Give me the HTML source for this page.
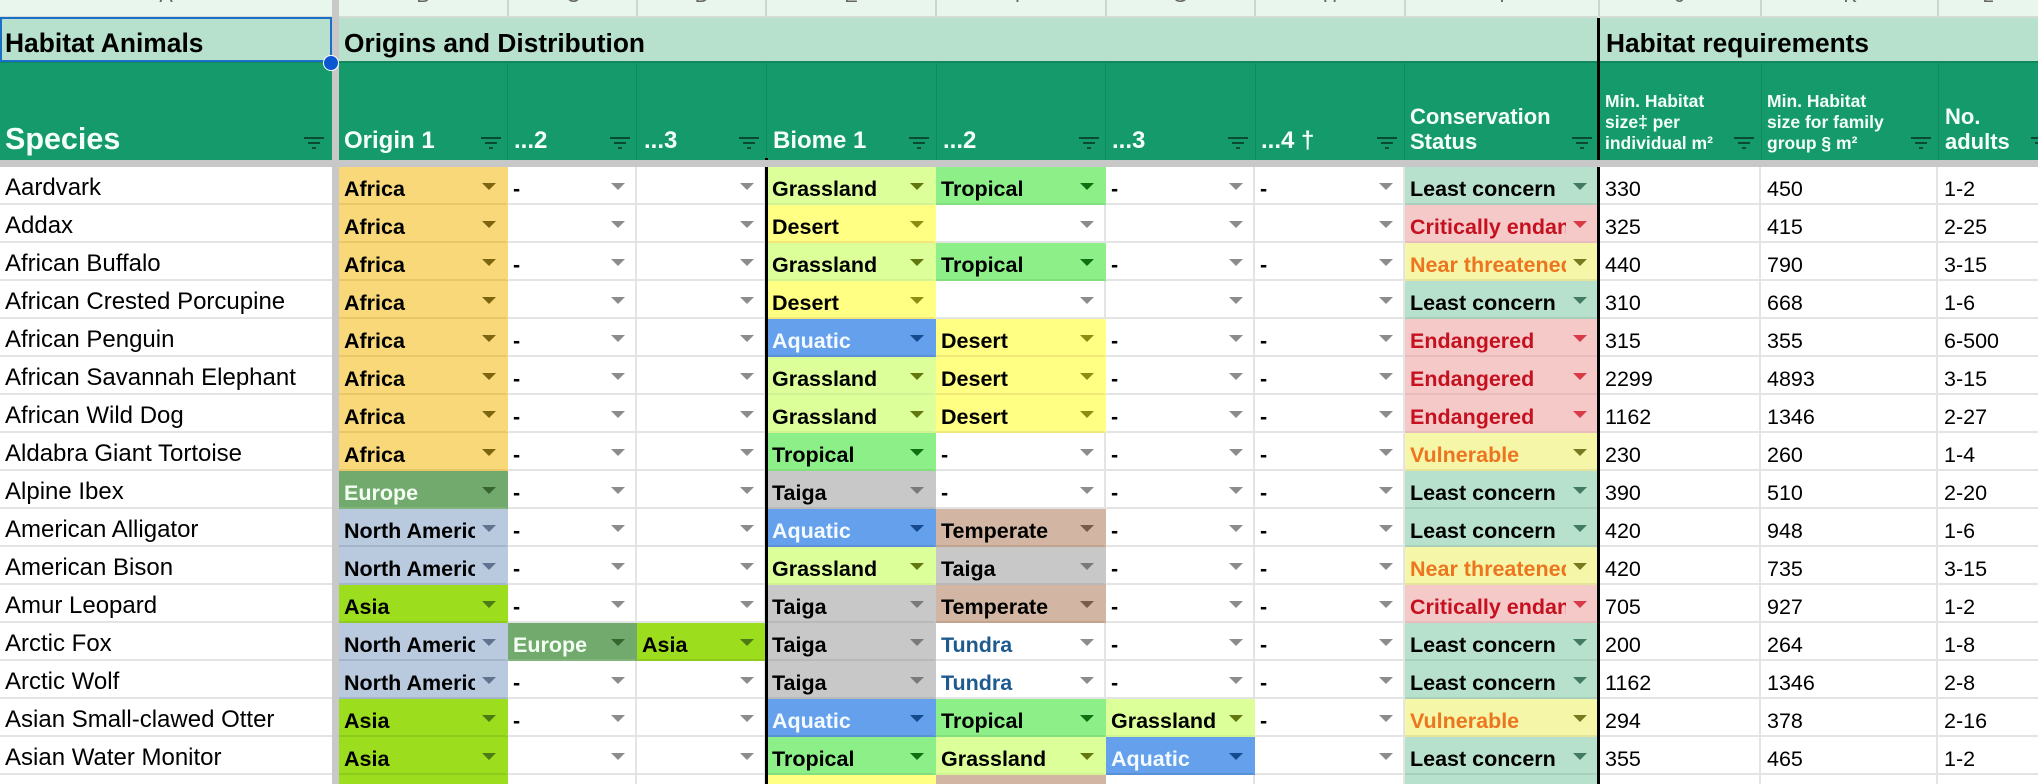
<!DOCTYPE html>
<html lang="en"><head><meta charset="utf-8"><title>Habitat Animals</title>
<style>
*{box-sizing:border-box}
html,body{margin:0;padding:0;background:#fff;overflow:hidden;width:2038px;height:784px}
#p{position:relative;width:2038px;height:784px;overflow:hidden;font-family:"Liberation Sans",Arial,sans-serif;color:#000;filter:blur(.35px)}
.a{position:absolute}
.t{position:absolute;white-space:nowrap;line-height:1;font-weight:bold}
.w{color:#f4fff9}
.l{position:absolute;top:-14px;font-size:20px;line-height:1;color:#666;width:40px;text-align:center}
.f{position:absolute;top:137px;width:20px;height:12px;fill:#0a4a32}
table{position:absolute;left:0;top:167px;border-collapse:separate;border-spacing:0;table-layout:fixed;width:2100px}
td{position:relative;height:38px;padding:9px 0 0 5px;vertical-align:top;font-size:21.5px;line-height:27px;font-weight:bold;white-space:nowrap;border-bottom:2px solid #e4e4e4;border-right:2px solid #e4e4e4;overflow:hidden}
td.n{padding:7px 0 0 5px;font-size:24px;line-height:28px;font-weight:normal;border-right:0}
td.g{background:#c8c8c8;border:0;padding:0}
td.v{font-weight:normal;padding-left:6px}
td i{display:block;font-style:normal;overflow:hidden;margin-right:31px}
td.d::after{content:"";position:absolute;right:10px;top:16px;border-left:7px solid transparent;border-right:7px solid transparent;border-top:7.5px solid #8c8c8c}
td.e{padding-left:6px}
.af{background:#f8d878;border-bottom-color:#e9c767}.af::after{border-top-color:#7d6510!important}
.eu{background:#72aa6e;border-bottom-color:#80b57c;color:#f4fff4}.eu::after{border-top-color:#36652f!important}
.as{background:#9cdd1e;border-bottom-color:#8ecb1c}.as::after{border-top-color:#4d7a12!important}
.na{background:#bacade;border-bottom-color:#a5b5c9}.na::after{border-top-color:#5f7390!important}
.gr{background:#dcff9a;border-bottom-color:#d3f293}.gr::after{border-top-color:#62780f!important}
.tr{background:#8cef88;border-bottom-color:#82de7e}.tr::after{border-top-color:#0f7012!important}
.de{background:#ffff84;border-bottom-color:#f0e878}.de::after{border-top-color:#8f8c14!important}
.aq{background:#64a0eb;border-bottom-color:#5a90d4;color:#f5faff}.aq::after{border-top-color:#164a8e!important}
.te{background:#d2b5a2;border-bottom-color:#c0a490}.te::after{border-top-color:#7b5a48!important}
.ta{background:#c8c8c8;border-bottom-color:#b9b9b9}.ta::after{border-top-color:#7a7a7a!important}
.tu{color:#1f5a8f}
.lc{background:#b7e1cd;border-bottom-color:#a8cfbc}.lc::after{border-top-color:#427a60!important}
.cr{background:#f6c9c9;border-bottom-color:#e8bcbc;color:#c5101f}.cr::after{border-top-color:#d83a48!important}
.nt{background:#f6f6a8;border-bottom-color:#e4e49c;color:#ec761f}.nt::after{border-top-color:#787a22!important}
.af,.eu,.as,.na,.gr,.tr,.de,.aq,.te,.ta,.lc,.cr,.nt{border-right-color:transparent}
</style></head>
<body>
<div id="p">
<!-- column letter strip -->
<div class="a" style="left:0;top:0;width:2038px;height:16px;background:#e8f6ed"></div>
<div class="a" style="left:0;top:16px;width:2038px;height:2px;background:#d4dcd6"></div>
<div class="a" style="left:507px;top:0;width:2px;height:16px;background:#ccd6cf"></div>
<div class="a" style="left:636px;top:0;width:2px;height:16px;background:#ccd6cf"></div>
<div class="a" style="left:765px;top:0;width:2px;height:16px;background:#ccd6cf"></div>
<div class="a" style="left:935px;top:0;width:2px;height:16px;background:#ccd6cf"></div>
<div class="a" style="left:1105px;top:0;width:2px;height:16px;background:#ccd6cf"></div>
<div class="a" style="left:1254px;top:0;width:2px;height:16px;background:#ccd6cf"></div>
<div class="a" style="left:1404px;top:0;width:2px;height:16px;background:#ccd6cf"></div>
<div class="a" style="left:1598px;top:0;width:2px;height:16px;background:#ccd6cf"></div>
<div class="a" style="left:1760px;top:0;width:2px;height:16px;background:#ccd6cf"></div>
<div class="a" style="left:1937px;top:0;width:2px;height:16px;background:#ccd6cf"></div>
<div class="l" style="left:146px">A</div><div class="l" style="left:403px">B</div><div class="l" style="left:553px">C</div><div class="l" style="left:682px">D</div><div class="l" style="left:831px">E</div><div class="l" style="left:1001px">F</div><div class="l" style="left:1160px">G</div><div class="l" style="left:1310px">H</div><div class="l" style="left:1482px">I</div><div class="l" style="left:1660px">J</div><div class="l" style="left:1830px">K</div><div class="l" style="left:1968px">L</div>

<!-- title and header rows -->
<div class="a" style="left:0;top:18px;width:2038px;height:43px;background:#b7e1cd"></div>
<div class="a" style="left:0;top:61px;width:2038px;height:99px;background:#159a6c;border-top:2px solid #12875f"></div>
<div class="a" style="left:507px;top:63px;width:1px;height:97px;background:#128a60"></div>
<div class="a" style="left:636px;top:63px;width:1px;height:97px;background:#128a60"></div>
<div class="a" style="left:766px;top:63px;width:1px;height:97px;background:#128a60"></div>
<div class="a" style="left:936px;top:63px;width:1px;height:97px;background:#128a60"></div>
<div class="a" style="left:1105px;top:63px;width:1px;height:97px;background:#128a60"></div>
<div class="a" style="left:1255px;top:63px;width:1px;height:97px;background:#128a60"></div>
<div class="a" style="left:1404px;top:63px;width:1px;height:97px;background:#128a60"></div>
<div class="a" style="left:1761px;top:63px;width:1px;height:97px;background:#128a60"></div>
<div class="a" style="left:1938px;top:63px;width:1px;height:97px;background:#128a60"></div>

<div class="t" style="left:5px;top:30px;font-size:26.4px">Habitat Animals</div>
<div class="t" style="left:344px;top:30px;font-size:26.3px">Origins and Distribution</div>
<div class="t" style="left:1606px;top:30px;font-size:26.3px">Habitat requirements</div>
<div class="t w" style="left:5px;top:124px;font-size:30.5px">Species</div>
<div class="t w" style="left:344px;top:129px;font-size:24px">Origin 1</div>
<div class="t w" style="left:514px;top:129px;font-size:24px">...2</div>
<div class="t w" style="left:644px;top:129px;font-size:24px">...3</div>
<div class="t w" style="left:773px;top:129px;font-size:24px">Biome 1</div>
<div class="t w" style="left:943px;top:129px;font-size:24px">...2</div>
<div class="t w" style="left:1112px;top:129px;font-size:24px">...3</div>
<div class="t w" style="left:1261px;top:129px;font-size:24px">...4 †</div>
<div class="t w" style="left:1410px;top:103.5px;font-size:22px;line-height:25.5px">Conservation<br>Status</div>
<div class="t w" style="left:1605px;top:91px;font-size:17.5px;line-height:21.2px">Min. Habitat<br>size‡ per<br>individual m²</div>
<div class="t w" style="left:1767px;top:91px;font-size:17.5px;line-height:21.2px">Min. Habitat<br>size for family<br>group § m²</div>
<div class="t w" style="left:1945px;top:103.5px;font-size:22px;line-height:25.5px">No.<br>adults</div>

<svg width="0" height="0" style="position:absolute"><symbol id="fi" viewBox="0 0 20 12"><path d="M0 0h20v2H0zM4 5h12v2H4zM8 10h4v2H8z"/></symbol></svg>
<svg class="f" style="left:304px"><use href="#fi"/></svg>
<svg class="f" style="left:481px"><use href="#fi"/></svg>
<svg class="f" style="left:610px"><use href="#fi"/></svg>
<svg class="f" style="left:739px"><use href="#fi"/></svg>
<svg class="f" style="left:909px"><use href="#fi"/></svg>
<svg class="f" style="left:1079px"><use href="#fi"/></svg>
<svg class="f" style="left:1228px"><use href="#fi"/></svg>
<svg class="f" style="left:1377px"><use href="#fi"/></svg>
<svg class="f" style="left:1572px"><use href="#fi"/></svg>
<svg class="f" style="left:1734px"><use href="#fi"/></svg>
<svg class="f" style="left:1911px"><use href="#fi"/></svg>
<svg class="f" style="left:2031px"><use href="#fi"/></svg>

<!-- body grid -->
<table>
<colgroup><col style="width:332px"><col style="width:7px"><col style="width:169px"><col style="width:129px"><col style="width:129px"><col style="width:170px"><col style="width:170px"><col style="width:149px"><col style="width:150px"><col style="width:194px"><col style="width:162px"><col style="width:177px"><col style="width:162px"></colgroup>
<tr><td class="n">Aardvark</td><td class="g"></td><td class="d af">Africa</td><td class="d">-</td><td class="d"></td><td class="d e gr">Grassland</td><td class="d tr">Tropical</td><td class="d">-</td><td class="d">-</td><td class="d lc">Least concern</td><td class="v">330</td><td class="v">450</td><td class="v">1-2</td></tr>
<tr><td class="n">Addax</td><td class="g"></td><td class="d af">Africa</td><td class="d"></td><td class="d"></td><td class="d e de">Desert</td><td class="d"></td><td class="d"></td><td class="d"></td><td class="d cr"><i>Critically endangered</i></td><td class="v">325</td><td class="v">415</td><td class="v">2-25</td></tr>
<tr><td class="n">African Buffalo</td><td class="g"></td><td class="d af">Africa</td><td class="d">-</td><td class="d"></td><td class="d e gr">Grassland</td><td class="d tr">Tropical</td><td class="d">-</td><td class="d">-</td><td class="d nt"><i>Near threatened</i></td><td class="v">440</td><td class="v">790</td><td class="v">3-15</td></tr>
<tr><td class="n">African Crested Porcupine</td><td class="g"></td><td class="d af">Africa</td><td class="d"></td><td class="d"></td><td class="d e de">Desert</td><td class="d"></td><td class="d"></td><td class="d"></td><td class="d lc">Least concern</td><td class="v">310</td><td class="v">668</td><td class="v">1-6</td></tr>
<tr><td class="n">African Penguin</td><td class="g"></td><td class="d af">Africa</td><td class="d">-</td><td class="d"></td><td class="d e aq">Aquatic</td><td class="d de">Desert</td><td class="d">-</td><td class="d">-</td><td class="d cr">Endangered</td><td class="v">315</td><td class="v">355</td><td class="v">6-500</td></tr>
<tr><td class="n">African Savannah Elephant</td><td class="g"></td><td class="d af">Africa</td><td class="d">-</td><td class="d"></td><td class="d e gr">Grassland</td><td class="d de">Desert</td><td class="d">-</td><td class="d">-</td><td class="d cr">Endangered</td><td class="v">2299</td><td class="v">4893</td><td class="v">3-15</td></tr>
<tr><td class="n">African Wild Dog</td><td class="g"></td><td class="d af">Africa</td><td class="d">-</td><td class="d"></td><td class="d e gr">Grassland</td><td class="d de">Desert</td><td class="d">-</td><td class="d">-</td><td class="d cr">Endangered</td><td class="v">1162</td><td class="v">1346</td><td class="v">2-27</td></tr>
<tr><td class="n">Aldabra Giant Tortoise</td><td class="g"></td><td class="d af">Africa</td><td class="d">-</td><td class="d"></td><td class="d e tr">Tropical</td><td class="d">-</td><td class="d">-</td><td class="d">-</td><td class="d nt">Vulnerable</td><td class="v">230</td><td class="v">260</td><td class="v">1-4</td></tr>
<tr><td class="n">Alpine Ibex</td><td class="g"></td><td class="d eu">Europe</td><td class="d">-</td><td class="d"></td><td class="d e ta">Taiga</td><td class="d">-</td><td class="d">-</td><td class="d">-</td><td class="d lc">Least concern</td><td class="v">390</td><td class="v">510</td><td class="v">2-20</td></tr>
<tr><td class="n">American Alligator</td><td class="g"></td><td class="d na"><i>North America</i></td><td class="d">-</td><td class="d"></td><td class="d e aq">Aquatic</td><td class="d te">Temperate</td><td class="d">-</td><td class="d">-</td><td class="d lc">Least concern</td><td class="v">420</td><td class="v">948</td><td class="v">1-6</td></tr>
<tr><td class="n">American Bison</td><td class="g"></td><td class="d na"><i>North America</i></td><td class="d">-</td><td class="d"></td><td class="d e gr">Grassland</td><td class="d ta">Taiga</td><td class="d">-</td><td class="d">-</td><td class="d nt"><i>Near threatened</i></td><td class="v">420</td><td class="v">735</td><td class="v">3-15</td></tr>
<tr><td class="n">Amur Leopard</td><td class="g"></td><td class="d as">Asia</td><td class="d">-</td><td class="d"></td><td class="d e ta">Taiga</td><td class="d te">Temperate</td><td class="d">-</td><td class="d">-</td><td class="d cr"><i>Critically endangered</i></td><td class="v">705</td><td class="v">927</td><td class="v">1-2</td></tr>
<tr><td class="n">Arctic Fox</td><td class="g"></td><td class="d na"><i>North America</i></td><td class="d eu">Europe</td><td class="d as">Asia</td><td class="d e ta">Taiga</td><td class="d tu">Tundra</td><td class="d">-</td><td class="d">-</td><td class="d lc">Least concern</td><td class="v">200</td><td class="v">264</td><td class="v">1-8</td></tr>
<tr><td class="n">Arctic Wolf</td><td class="g"></td><td class="d na"><i>North America</i></td><td class="d">-</td><td class="d"></td><td class="d e ta">Taiga</td><td class="d tu">Tundra</td><td class="d">-</td><td class="d">-</td><td class="d lc">Least concern</td><td class="v">1162</td><td class="v">1346</td><td class="v">2-8</td></tr>
<tr><td class="n">Asian Small-clawed Otter</td><td class="g"></td><td class="d as">Asia</td><td class="d">-</td><td class="d"></td><td class="d e aq">Aquatic</td><td class="d tr">Tropical</td><td class="d gr">Grassland</td><td class="d">-</td><td class="d nt">Vulnerable</td><td class="v">294</td><td class="v">378</td><td class="v">2-16</td></tr>
<tr><td class="n">Asian Water Monitor</td><td class="g"></td><td class="d as">Asia</td><td class="d"></td><td class="d"></td><td class="d e tr">Tropical</td><td class="d gr">Grassland</td><td class="d aq">Aquatic</td><td class="d"></td><td class="d lc">Least concern</td><td class="v">355</td><td class="v">465</td><td class="v">1-2</td></tr>
<tr><td class="n"></td><td class="g"></td><td class="as"></td><td></td><td></td><td class="de"></td><td class="te"></td><td></td><td></td><td class="lc"></td><td></td><td></td><td></td></tr>
</table>

<!-- freeze bars -->
<div class="a" style="left:0;top:160px;width:2038px;height:7px;background:#c8c8c8"></div>
<div class="a" style="left:332px;top:0;width:7px;height:784px;background:#c8c8c8"></div>

<!-- thick black dividers -->
<div class="a" style="left:765px;top:158px;width:3px;height:2px;background:#000"></div>
<div class="a" style="left:765px;top:167px;width:3px;height:617px;background:#000"></div>
<div class="a" style="left:1597px;top:18px;width:3px;height:142px;background:#000"></div>
<div class="a" style="left:1597px;top:167px;width:3px;height:617px;background:#000"></div>

<!-- selected cell -->
<div class="a" style="left:0;top:17px;width:332px;height:45px;border:2px solid #1a6fc9"></div>
<div class="a" style="left:323px;top:55px;width:16px;height:16px;border-radius:50%;background:#0b57d0;border:1.5px solid #fff"></div>
</div>
</body></html>
